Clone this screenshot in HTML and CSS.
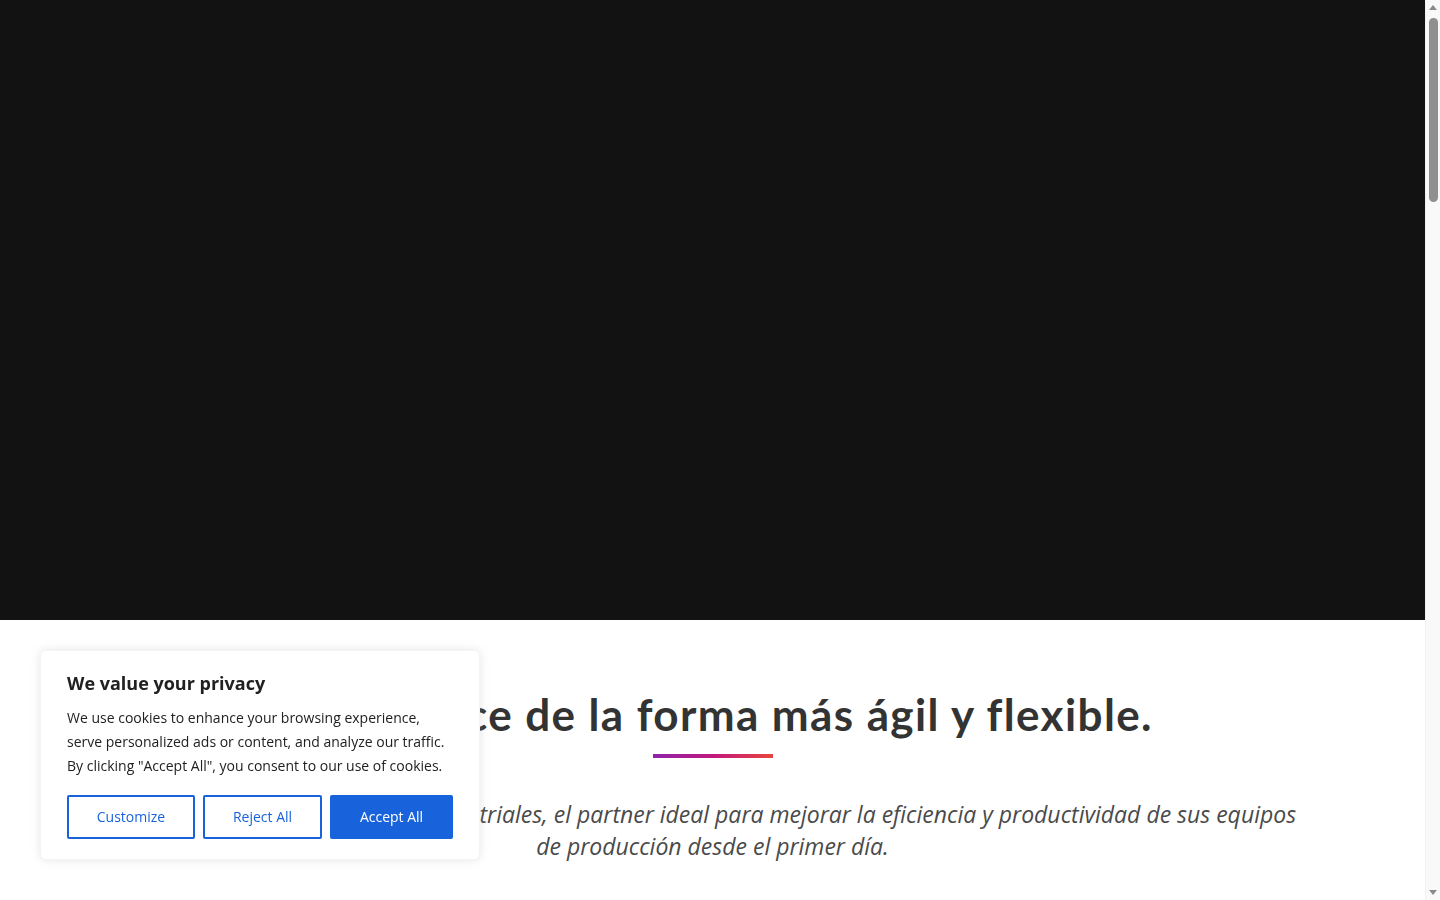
FILE: index.html
```html
<!DOCTYPE html>
<html lang="es">
<head>
<meta charset="utf-8">
<title>Automatización</title>
<link rel="stylesheet" href="styles.css">
</head>
<body>
<main class="page">
  <section class="hero"></section>
  <section class="intro">
    <h1 class="intro-title">Automatice de la forma más ágil y flexible.</h1>
    <div class="divider"></div>
    <p class="intro-text">Especialistas en los procesos industriales, el partner ideal para mejorar la eficiencia y productividad de sus equipos<br>de producción desde el primer día.</p>
  </section>
  <section class="rest"></section>
</main>

<div class="scrollbar" aria-hidden="true">
  <span class="scroll-arrow scroll-up"></span>
  <span class="scroll-thumb"></span>
  <span class="scroll-arrow scroll-down"></span>
</div>

<div class="cookie-banner">
  <p class="cookie-title">We value your privacy</p>
  <p class="cookie-desc">We use cookies to enhance your browsing experience, serve personalized ads or content, and analyze our traffic. By clicking "Accept All", you consent to our use of cookies.</p>
  <div class="cookie-actions">
    <button class="btn btn-outline btn-customize">Customize</button>
    <button class="btn btn-outline btn-reject">Reject All</button>
    <button class="btn btn-solid btn-accept">Accept All</button>
  </div>
</div>
</body>
</html>
```

FILE: styles.css
```css
html, body {
  margin: 0;
  padding: 0;
  background: #ffffff;
}
body {
  font-family: "Open Sans", "Liberation Sans", sans-serif;
  overflow: hidden;
}
.page {
  margin-right: 15px;
}
.hero {
  height: 620px;
  background: #121212;
}
.intro {
  padding-top: 66px;
  text-align: center;
}
.intro-title {
  margin: 0;
  font-family: "Lato", "Open Sans", sans-serif;
  font-weight: 700;
  font-size: 44px;
  line-height: 56px;
  color: #333333;
  letter-spacing: 1.4px;
}
.divider {
  width: 120px;
  height: 4px;
  margin: 12px auto 0;
  background: linear-gradient(90deg, #8e24aa 0%, #c2187e 50%, #e8453c 100%);
}
.intro-text {
  margin: 40px 0 0;
  font-family: "Open Sans", sans-serif;
  font-style: italic;
  font-size: 23px;
  line-height: 32px;
  color: #4a4a4a;
}
.rest {
  height: 400px;
}

/* fake browser scrollbar */
.scrollbar {
  position: fixed;
  top: 0;
  right: 0;
  width: 15px;
  height: 100%;
  background: #f9f9f9;
  border-left: 1px solid #f0f0f0;
  box-sizing: border-box;
}
.scroll-thumb {
  position: absolute;
  top: 18px;
  left: 3px;
  width: 9px;
  height: 184px;
  border-radius: 5px;
  background: #8f8f8f;
}
.scroll-arrow {
  position: absolute;
  left: 3px;
  width: 0;
  height: 0;
  border-left: 4px solid transparent;
  border-right: 4px solid transparent;
}
.scroll-up {
  top: 5px;
  border-bottom: 5px solid #8a8a8a;
}
.scroll-down {
  bottom: 5px;
  border-top: 5px solid #8a8a8a;
}

/* cookie consent banner */
.cookie-banner {
  position: fixed;
  left: 40px;
  bottom: 40px;
  width: 440px;
  box-sizing: border-box;
  padding: 22px 26px 20px;
  background: #ffffff;
  border: 1px solid #f4f4f4;
  border-radius: 6px;
  box-shadow: 0 0 10px rgba(172, 171, 171, 0.3);
  font-family: "Open Sans", sans-serif;
  color: #212121;
}
.cookie-title {
  margin: 0 0 13px;
  font-size: 18px;
  font-weight: 700;
  line-height: 20px;
  color: #212121;
}
.cookie-desc {
  margin: 0;
  font-size: 14px;
  line-height: 24px;
  color: #212121;
}
.cookie-actions {
  display: flex;
  gap: 8px;
  margin-top: 17px;
}
.btn {
  box-sizing: border-box;
  height: 44px;
  padding: 8px 0;
  border: 2px solid #1863dc;
  border-radius: 2px;
  font-family: "Open Sans", sans-serif;
  font-size: 14px;
  line-height: 24px;
  cursor: pointer;
}
.btn-outline {
  background: #ffffff;
  color: #1863dc;
}
.btn-solid {
  background: #1863dc;
  color: #ffffff;
}
.btn-customize { width: 128px; }
.btn-reject { width: 119px; }
.btn-accept { width: 123px; }
```
